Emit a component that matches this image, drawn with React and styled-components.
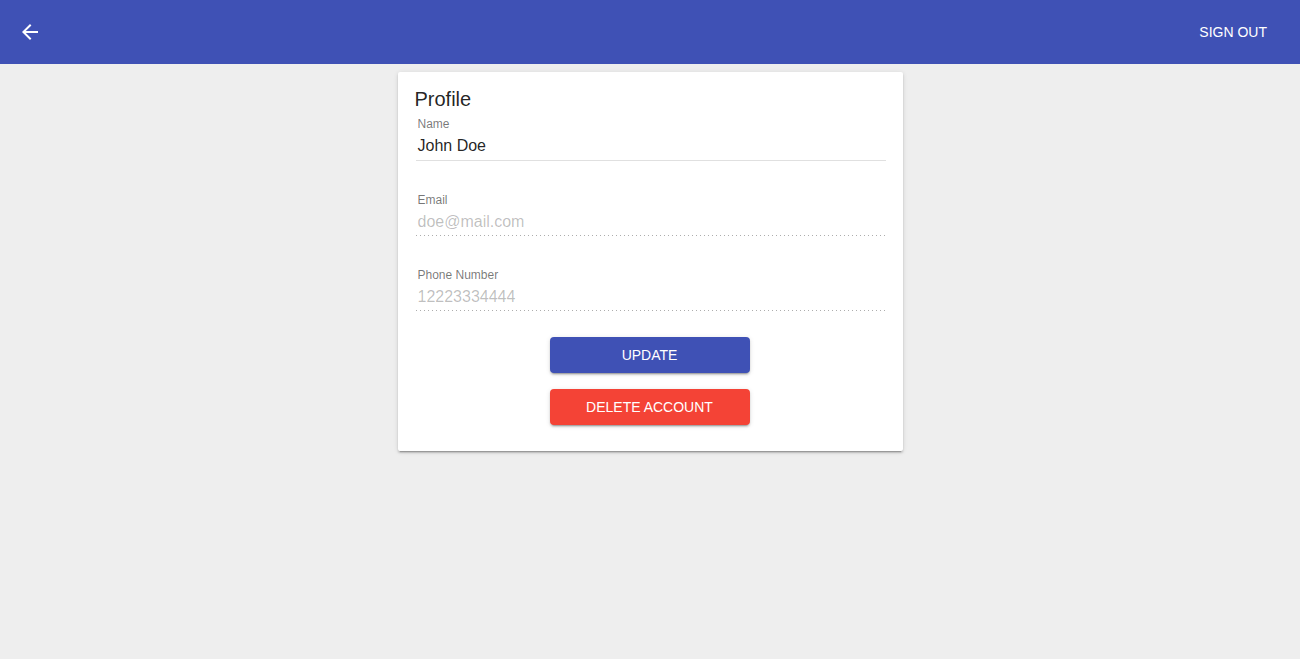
import React from "react";
import styled, { createGlobalStyle } from "styled-components";

const Global = createGlobalStyle`
  html, body { margin: 0; padding: 0; background: #eeeeee; }
  body { font-family: "Liberation Sans", Arial, sans-serif; }
  * { box-sizing: border-box; }
`;

const Page = styled.div`
  min-height: 659px;
  background: #eeeeee;
  display: flex;
  flex-direction: column;
`;

const AppBar = styled.header`
  height: 64px;
  background: #3f51b5;
  display: flex;
  align-items: center;
  justify-content: space-between;
  padding: 0 25px 0 18px;
  color: #fff;
`;

const IconButton = styled.button`
  background: none;
  border: 0;
  padding: 0;
  width: 24px;
  height: 24px;
  display: flex;
  color: #fff;
  cursor: pointer;
`;

const TextButton = styled.button`
  background: none;
  border: 0;
  color: #fff;
  font-family: "Liberation Sans", Arial, sans-serif;
  font-size: 14px;
  line-height: 20px;
  padding: 6px 8px;
  text-transform: uppercase;
  cursor: pointer;
`;

const Main = styled.main`
  display: flex;
  justify-content: center;
  padding-top: 8px;
`;

const Card = styled.section`
  width: 505px;
  background: #fff;
  border-radius: 2px;
  box-shadow: 0px 3px 1px -2px rgba(0, 0, 0, 0.2), 0px 2px 2px 0px rgba(0, 0, 0, 0.14),
    0px 1px 5px 0px rgba(0, 0, 0, 0.12);
  padding: 15px 17px 26px 16px;
  display: flex;
  flex-direction: column;
`;

const Title = styled.h2`
  margin: 0 0 0 1px;
  font-size: 20px;
  line-height: 24px;
  font-weight: 400;
  color: rgba(0, 0, 0, 0.87);
`;

const Fields = styled.div`
  display: flex;
  flex-direction: column;
  gap: 31px;
  margin: 5px 0 0 2px;
`;

const Field = styled.div`
  display: flex;
  flex-direction: column;
  padding-bottom: ${(p) => (p.$disabled ? "4px" : "5px")};
  border-bottom: 1px solid ${(p) => (p.$disabled ? "transparent" : "#e0e0e0")};
  background-image: ${(p) =>
    p.$disabled ? "linear-gradient(to right, rgba(0,0,0,0.32) 25%, transparent 25%)" : "none"};
  background-size: 4px 1px;
  background-repeat: repeat-x;
  background-origin: border-box;
  background-position: left bottom;
`;

const Label = styled.label`
  font-size: 12px;
  line-height: 16px;
  color: rgba(0, 0, 0, 0.54);
  padding-left: 2px;
`;

const Value = styled.div`
  font-size: 16px;
  line-height: 19px;
  padding: 4px 0 0 2px;
  color: ${(p) => (p.$disabled ? "rgba(0,0,0,0.26)" : "rgba(0,0,0,0.87)")};
`;

const Actions = styled.div`
  display: flex;
  flex-direction: column;
  align-items: center;
  gap: 16px;
  margin-top: 26px;
`;

const Button = styled.button`
  width: 200px;
  height: 36px;
  border: 0;
  border-radius: 4px;
  background: ${(p) => p.$bg};
  color: #fff;
  font-family: "Liberation Sans", Arial, sans-serif;
  font-size: 14px;
  text-transform: uppercase;
  box-shadow: 0px 3px 1px -2px rgba(0, 0, 0, 0.2), 0px 2px 2px 0px rgba(0, 0, 0, 0.14),
    0px 1px 5px 0px rgba(0, 0, 0, 0.12);
  cursor: pointer;
`;

function ProfileField({ label, value, disabled }) {
  return (
    <Field $disabled={disabled}>
      <Label>{label}</Label>
      <Value $disabled={disabled}>{value}</Value>
    </Field>
  );
}

export default function App() {
  return (
    <Page>
      <Global />
      <AppBar>
        <IconButton aria-label="back">
          <svg width="24" height="24" viewBox="0 0 24 24" fill="currentColor">
            <path d="M20 11H7.83l5.59-5.59L12 4l-8 8 8 8 1.41-1.41L7.83 13H20v-2z" />
          </svg>
        </IconButton>
        <TextButton>Sign out</TextButton>
      </AppBar>
      <Main>
        <Card>
          <Title>Profile</Title>
          <Fields>
            <ProfileField label="Name" value="John Doe" />
            <ProfileField label="Email" value="doe@mail.com" disabled />
            <ProfileField label="Phone Number" value="12223334444" disabled />
          </Fields>
          <Actions>
            <Button $bg="#3f51b5">Update</Button>
            <Button $bg="#f44336">Delete account</Button>
          </Actions>
        </Card>
      </Main>
    </Page>
  );
}
